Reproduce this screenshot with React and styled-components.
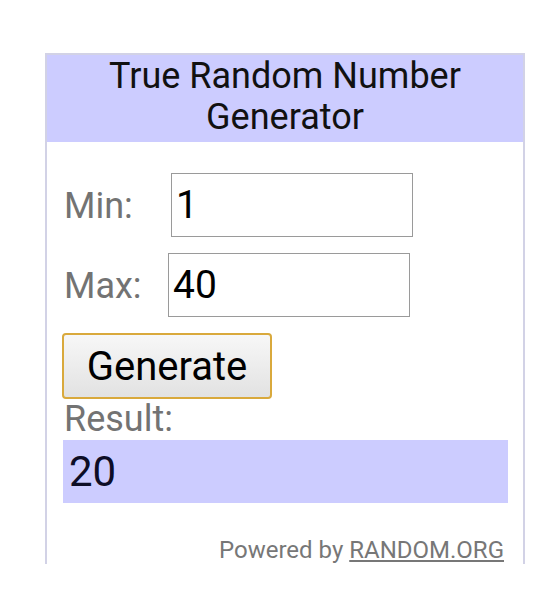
import styled, { createGlobalStyle } from "styled-components";

const GlobalStyle = createGlobalStyle`
  body {
    margin: 0;
    background: #ffffff;
    font-family: Roboto, "Noto Sans", Arial, sans-serif;
  }
`;

const Page = styled.div`
  padding: 53px 0 0 45px;
`;

const Widget = styled.div`
  box-sizing: border-box;
  width: 480px;
  border: 2px solid #d2d2e6;
  border-bottom: none;
`;

const Header = styled.div`
  background: #ccccff;
  text-align: center;
  color: #111111;
  font-size: 36px;
  line-height: 41px;
  padding: 1px 0 4px;
`;

const Body = styled.div`
  padding: 31px 15px 0 16px;
  display: flex;
  flex-direction: column;
`;

const Row = styled.div`
  display: flex;
  align-items: baseline;
  margin-bottom: 16px;
`;

const Label = styled.label`
  width: ${(p) => p.$width}px;
  padding-left: 1px;
  color: #737373;
  font-size: 36px;
`;

const Input = styled.input`
  box-sizing: border-box;
  width: 242px;
  height: 64px;
  border: 1px solid #9a9a9a;
  padding: 0 4px;
  font-family: inherit;
  font-size: 39px;
  color: #000;
  background: #fff;
  outline: none;
`;

const Button = styled.button`
  align-self: flex-start;
  box-sizing: border-box;
  width: 210px;
  height: 66px;
  margin-left: -1px;
  border: 2px solid #d9a93c;
  border-radius: 4px;
  background: linear-gradient(#f7f7f7, #e2e2e2);
  font-family: inherit;
  font-size: 40px;
  color: #000;
  padding: 0;
`;

const ResultLabel = styled.div`
  color: #737373;
  font-size: 36px;
  line-height: 41px;
  padding-left: 1px;
`;

const ResultBox = styled.div`
  box-sizing: border-box;
  height: 63px;
  background: #ccccff;
  color: #0d0d26;
  font-size: 42px;
  line-height: 63px;
  padding-left: 6px;
`;

const Footer = styled.div`
  margin-top: 33px;
  text-align: right;
  padding-right: 4px;
  color: #777777;
  font-size: 24px;
  line-height: 28px;
`;

const Link = styled.a`
  color: #777777;
  text-decoration: underline;
`;

const App = () => {
  return (
    <Page>
      <GlobalStyle />
      <Widget>
        <Header>
          True Random Number
          <br />
          Generator
        </Header>
        <Body>
          <Row>
            <Label $width={107}>Min:</Label>
            <Input defaultValue="1" />
          </Row>
          <Row>
            <Label $width={104}>Max:</Label>
            <Input defaultValue="40" />
          </Row>
          <Button>Generate</Button>
          <ResultLabel>Result:</ResultLabel>
          <ResultBox>20</ResultBox>
          <Footer>
            Powered by <Link href="#">RANDOM.ORG</Link>
          </Footer>
        </Body>
      </Widget>
    </Page>
  );
};

export default App;
